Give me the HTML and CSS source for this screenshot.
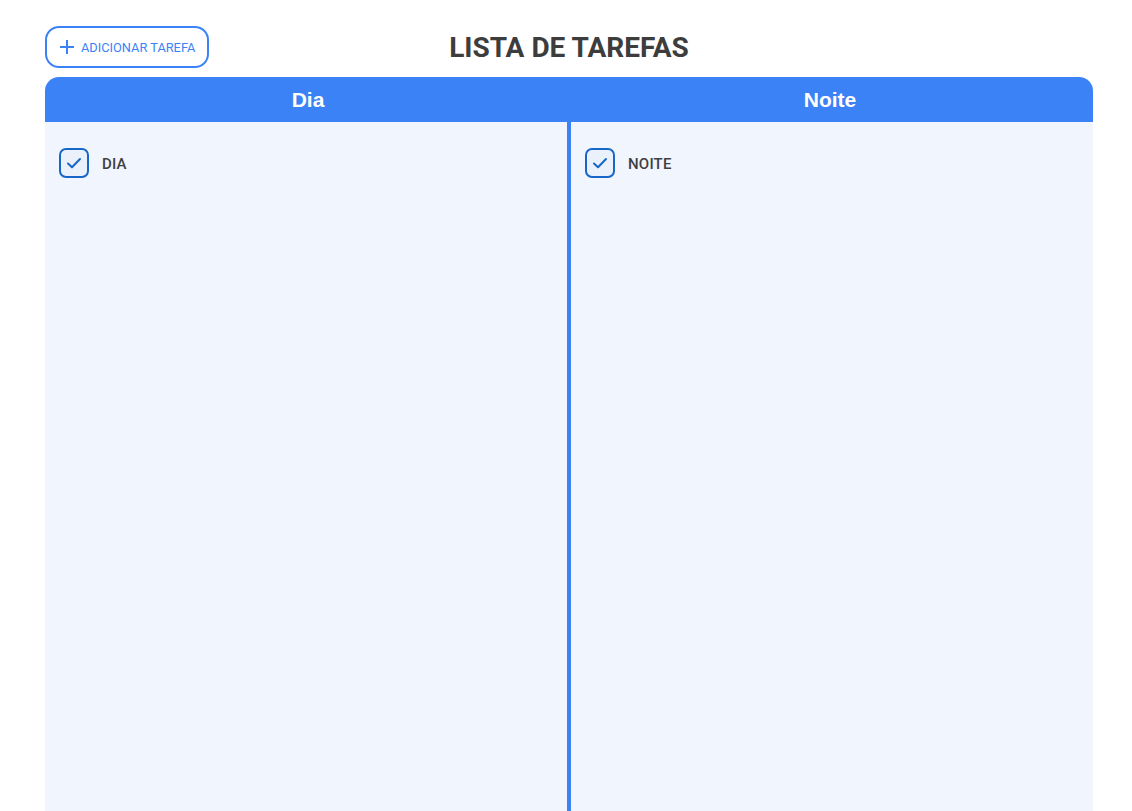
FILE: index.html
```html
<!DOCTYPE html>
<html lang="pt">
<head>
<meta charset="utf-8">
<title>Lista de Tarefas</title>
<link rel="stylesheet" href="styles.css">
</head>
<body>
<div class="page">
  <div class="topbar">
    <button class="add-btn" type="button">
      <svg class="plus" width="16" height="16" viewBox="0 0 16 16"><path d="M8 1v14M1 8h14" stroke="currentColor" stroke-width="2" fill="none"/></svg>
      <span>ADICIONAR TAREFA</span>
    </button>
    <h1 class="title">LISTA DE TAREFAS</h1>
    <div></div>
  </div>
  <div class="board">
    <div class="col-head">Dia</div>
    <div class="col-head">Noite</div>
    <div class="col col-left">
      <div class="task">
        <span class="check"><svg width="16" height="12" viewBox="0 0 16 12"><path d="M2 6.5l4 3.8L14 2" stroke="currentColor" stroke-width="2" fill="none" stroke-linecap="round" stroke-linejoin="round"/></svg></span>
        <span class="task-label">DIA</span>
      </div>
    </div>
    <div class="col">
      <div class="task">
        <span class="check"><svg width="16" height="12" viewBox="0 0 16 12"><path d="M2 6.5l4 3.8L14 2" stroke="currentColor" stroke-width="2" fill="none" stroke-linecap="round" stroke-linejoin="round"/></svg></span>
        <span class="task-label">NOITE</span>
      </div>
    </div>
  </div>
</div>
</body>
</html>
```
FILE: styles.css
```css
html, body {
  margin: 0;
  padding: 0;
  background: #ffffff;
  font-family: Roboto, "Liberation Sans", Arial, sans-serif;
}

.page {
  width: 1048px;
  padding: 26px 0 0 45px;
}

.topbar {
  display: grid;
  grid-template-columns: 1fr auto 1fr;
  align-items: center;
  height: 42px;
  margin-bottom: 9px;
}

.add-btn {
  justify-self: start;
  display: flex;
  align-items: center;
  gap: 6px;
  height: 42px;
  width: 164px;
  padding: 0 0 0 12px;
  border: 2px solid #3b82f6;
  border-radius: 14px;
  background: #ffffff;
  color: #3b82f6;
  font-family: Roboto, sans-serif;
  font-size: 12.8px;
  font-weight: 400;
  letter-spacing: 0;
  white-space: nowrap;
  cursor: pointer;
}

.plus {
  display: block;
  flex: none;
}

.title {
  margin: 0;
  font-family: Roboto, sans-serif;
  font-size: 28px;
  font-weight: 700;
  color: #3d3d3d;
  letter-spacing: 0;
}

.board {
  display: grid;
  grid-template-columns: 526px 522px;
  grid-template-rows: 45px 720px;
}

.col-head {
  background: #3b82f6;
  color: #ffffff;
  font-family: "Liberation Sans", Arial, sans-serif;
  font-size: 21px;
  font-weight: 700;
  display: flex;
  align-items: center;
  justify-content: center;
}

.col-head:first-child {
  border-top-left-radius: 14px;
}

.col-head:nth-child(2) {
  border-top-right-radius: 14px;
  padding-right: 4px;
}

.col {
  background: #f1f5fd;
  padding: 26px 14px;
}

.col-left {
  border-right: 4px solid #3b82f6;
}

.task {
  display: flex;
  align-items: center;
  gap: 13px;
}

.check {
  box-sizing: border-box;
  width: 30px;
  height: 30px;
  border: 2px solid #1667c8;
  border-radius: 7px;
  background: #eaf1fb;
  color: #1667c8;
  display: flex;
  align-items: center;
  justify-content: center;
}

.check svg {
  display: block;
}

.task-label {
  font-family: Roboto, sans-serif;
  font-size: 15px;
  font-weight: 500;
  color: #3f3f3f;
  letter-spacing: 0.2px;
  padding-top: 1px;
}
```
